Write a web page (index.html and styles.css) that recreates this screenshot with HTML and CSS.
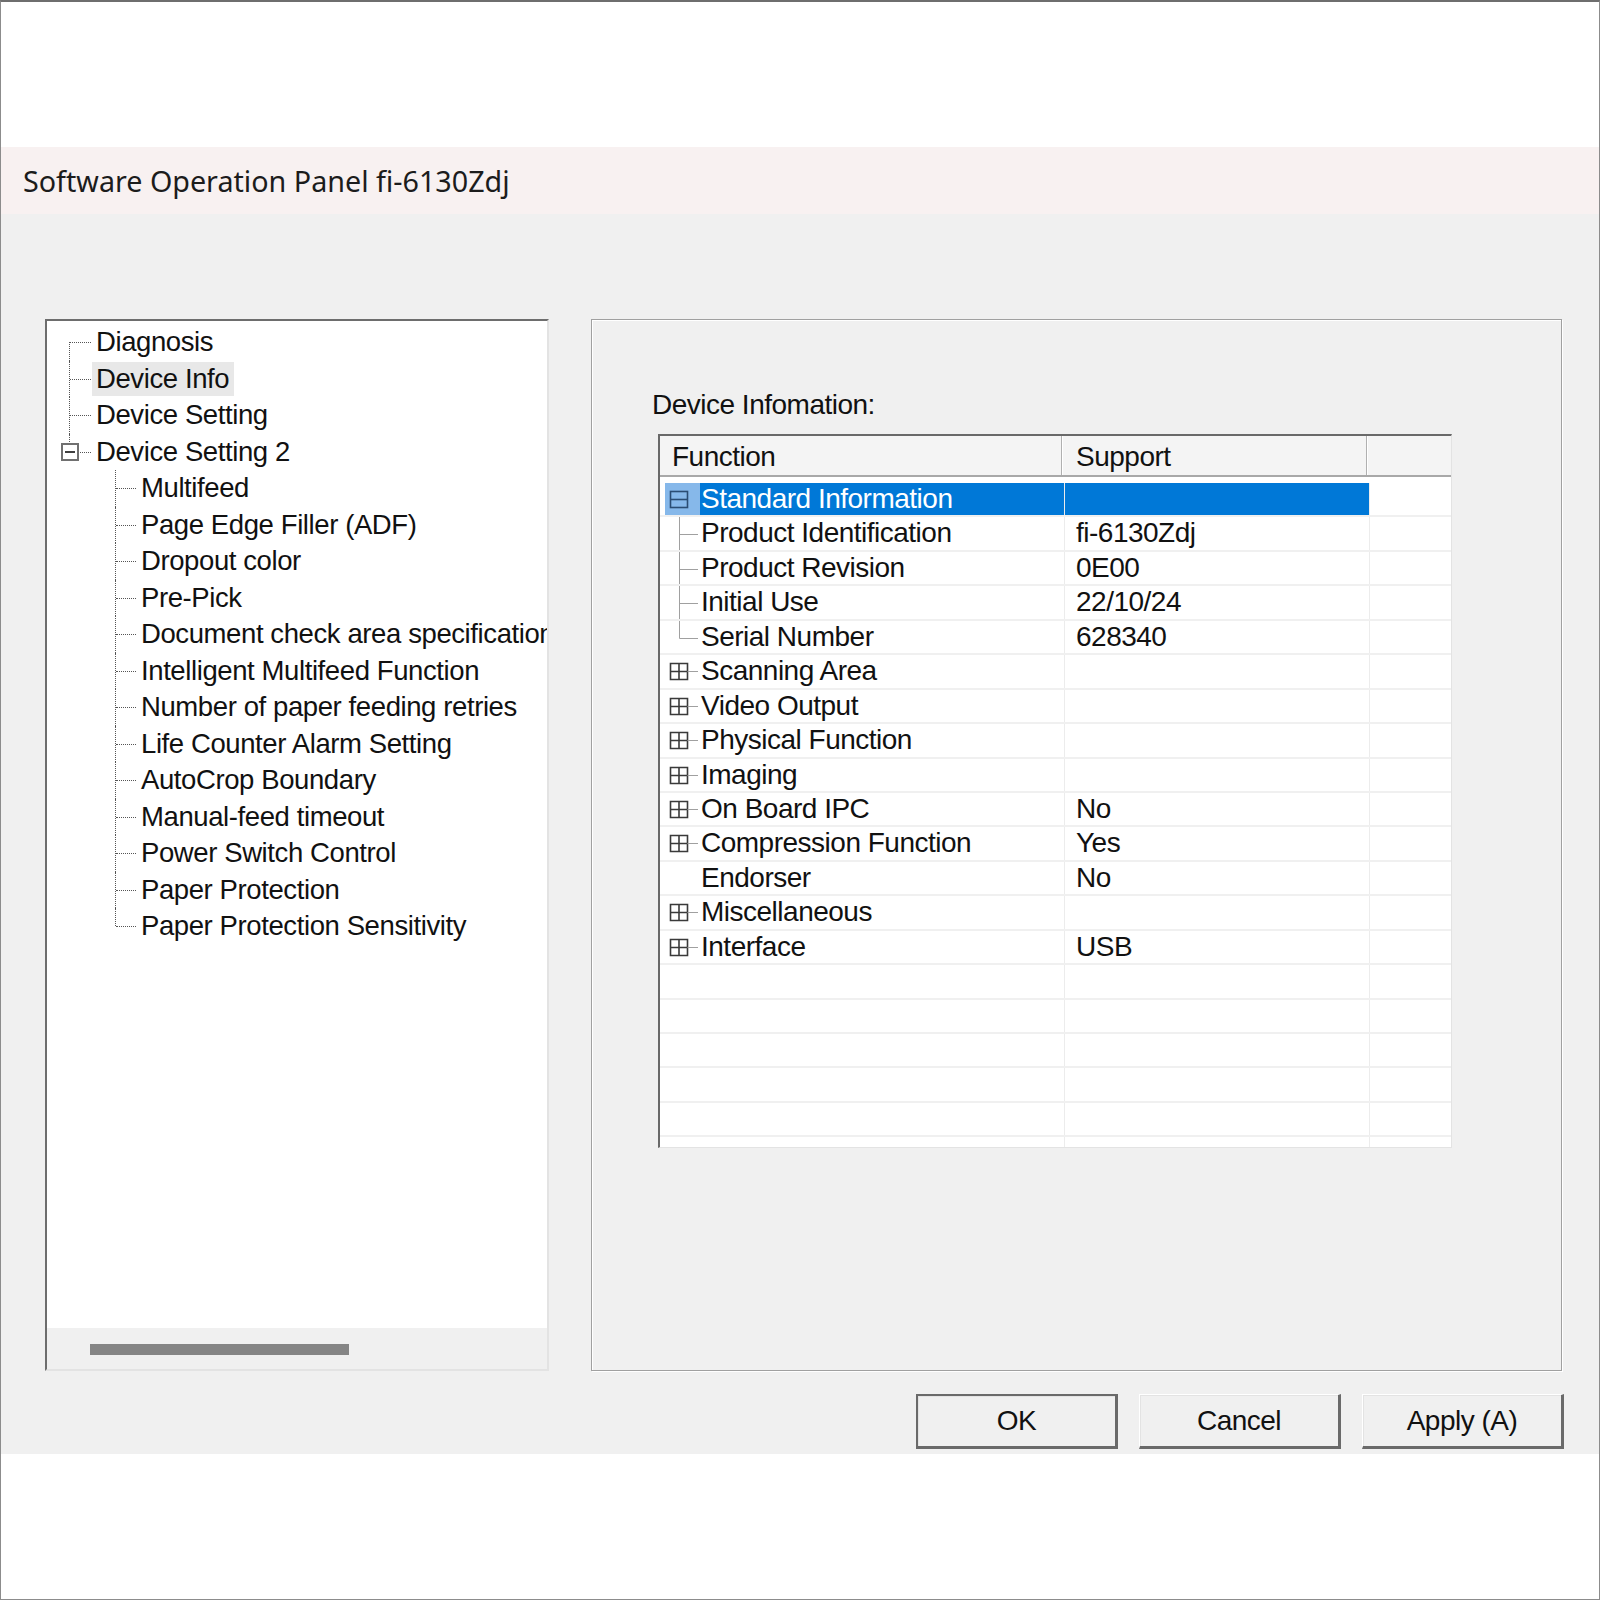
FILE: index.html
```html
<!DOCTYPE html>
<html lang="en">

<head>
    <meta charset="UTF-8">
    <meta name="viewport" content="width=device-width, initial-scale=1.0">
    <title>Software Operation Panel fi-6130Zdj</title>
    <link rel="stylesheet" href="styles.css">
</head>

<body>
    <div class="screen">
        <div class="dialog">
            <div class="titlebar">Software Operation Panel fi-6130Zdj</div>

            <div class="dialog-body">
                <div class="panels">
                    <!-- left: settings tree -->
                    <div class="tree">
                        <ul class="tree-list">
                            <li class="node l1 first"><span class="branch"></span><span class="label">Diagnosis</span></li>
                            <li class="node l1"><span class="branch"></span><span class="label selected">Device Info</span></li>
                            <li class="node l1"><span class="branch"></span><span class="label">Device Setting</span></li>
                            <li class="node l1 last"><span class="branch"><span class="toggle"></span></span><span class="label">Device Setting 2</span></li>
                            <li class="node l2"><span class="branch"></span><span class="label">Multifeed</span></li>
                            <li class="node l2"><span class="branch"></span><span class="label">Page Edge Filler (ADF)</span></li>
                            <li class="node l2"><span class="branch"></span><span class="label">Dropout color</span></li>
                            <li class="node l2"><span class="branch"></span><span class="label">Pre-Pick</span></li>
                            <li class="node l2"><span class="branch"></span><span class="label">Document check area specification</span></li>
                            <li class="node l2"><span class="branch"></span><span class="label">Intelligent Multifeed Function</span></li>
                            <li class="node l2"><span class="branch"></span><span class="label">Number of paper feeding retries</span></li>
                            <li class="node l2"><span class="branch"></span><span class="label">Life Counter Alarm Setting</span></li>
                            <li class="node l2"><span class="branch"></span><span class="label">AutoCrop Boundary</span></li>
                            <li class="node l2"><span class="branch"></span><span class="label">Manual-feed timeout</span></li>
                            <li class="node l2"><span class="branch"></span><span class="label">Power Switch Control</span></li>
                            <li class="node l2"><span class="branch"></span><span class="label">Paper Protection</span></li>
                            <li class="node l2 last"><span class="branch"></span><span class="label">Paper Protection Sensitivity</span></li>
                        </ul>
                        <div class="hscroll"><div class="thumb"></div></div>
                    </div>

                    <!-- right: device information -->
                    <div class="group">
                        <div class="group-label">Device Infomation:</div>
                        <div class="list">
                            <div class="list-head">
                                <div class="hcol c1">Function</div>
                                <div class="hcol c2">Support</div>
                                <div class="hcol c3"></div>
                            </div>
                            <div class="list-body">
                                <div class="row selected">
                                    <div class="cell c1">
                                        <span class="tw"><svg width="35" height="34" viewBox="0 0 35 34"><rect x="5.5" y="8.5" width="17" height="16" fill="none" stroke="#2b4d74" stroke-width="1.6"/><path d="M5.5 16.5H22.5" stroke="#2b4d74" stroke-width="1.6"/></svg></span>
                                        <span class="txt">Standard Information</span>
                                    </div>
                                    <div class="cell c2"></div>
                                    <div class="cell c3"></div>
                                </div>
                                <div class="row">
                                    <div class="cell c1">
                                        <span class="tw"><svg width="35" height="35" viewBox="0 0 35 35"><path d="M14.5 0V35M14.5 17.5H33" stroke="#a0a0a0" fill="none"/></svg></span>
                                        <span class="txt">Product Identification</span>
                                    </div>
                                    <div class="cell c2">fi-6130Zdj</div>
                                    <div class="cell c3"></div>
                                </div>
                                <div class="row">
                                    <div class="cell c1">
                                        <span class="tw"><svg width="35" height="35" viewBox="0 0 35 35"><path d="M14.5 0V35M14.5 17.5H33" stroke="#a0a0a0" fill="none"/></svg></span>
                                        <span class="txt">Product Revision</span>
                                    </div>
                                    <div class="cell c2">0E00</div>
                                    <div class="cell c3"></div>
                                </div>
                                <div class="row">
                                    <div class="cell c1">
                                        <span class="tw"><svg width="35" height="35" viewBox="0 0 35 35"><path d="M14.5 0V35M14.5 17.5H33" stroke="#a0a0a0" fill="none"/></svg></span>
                                        <span class="txt">Initial Use</span>
                                    </div>
                                    <div class="cell c2">22/10/24</div>
                                    <div class="cell c3"></div>
                                </div>
                                <div class="row">
                                    <div class="cell c1">
                                        <span class="tw"><svg width="35" height="35" viewBox="0 0 35 35"><path d="M14.5 0V17.5H33" stroke="#a0a0a0" fill="none"/></svg></span>
                                        <span class="txt">Serial Number</span>
                                    </div>
                                    <div class="cell c2">628340</div>
                                    <div class="cell c3"></div>
                                </div>
                                <div class="row">
                                    <div class="cell c1">
                                        <span class="tw"><svg width="35" height="34" viewBox="0 0 35 34"><path d="M5.5 8.5H22.5V24.5H5.5ZM14 8.5V24.5M5.5 16.5H22.5" stroke="#3a3a3a" stroke-width="1.6" fill="none"/><path d="M22.5 16.5H33" stroke="#a0a0a0"/></svg></span>
                                        <span class="txt">Scanning Area</span>
                                    </div>
                                    <div class="cell c2"></div>
                                    <div class="cell c3"></div>
                                </div>
                                <div class="row">
                                    <div class="cell c1">
                                        <span class="tw"><svg width="35" height="34" viewBox="0 0 35 34"><path d="M5.5 8.5H22.5V24.5H5.5ZM14 8.5V24.5M5.5 16.5H22.5" stroke="#3a3a3a" stroke-width="1.6" fill="none"/><path d="M22.5 16.5H33" stroke="#a0a0a0"/></svg></span>
                                        <span class="txt">Video Output</span>
                                    </div>
                                    <div class="cell c2"></div>
                                    <div class="cell c3"></div>
                                </div>
                                <div class="row">
                                    <div class="cell c1">
                                        <span class="tw"><svg width="35" height="34" viewBox="0 0 35 34"><path d="M5.5 8.5H22.5V24.5H5.5ZM14 8.5V24.5M5.5 16.5H22.5" stroke="#3a3a3a" stroke-width="1.6" fill="none"/><path d="M22.5 16.5H33" stroke="#a0a0a0"/></svg></span>
                                        <span class="txt">Physical Function</span>
                                    </div>
                                    <div class="cell c2"></div>
                                    <div class="cell c3"></div>
                                </div>
                                <div class="row">
                                    <div class="cell c1">
                                        <span class="tw"><svg width="35" height="34" viewBox="0 0 35 34"><path d="M5.5 8.5H22.5V24.5H5.5ZM14 8.5V24.5M5.5 16.5H22.5" stroke="#3a3a3a" stroke-width="1.6" fill="none"/><path d="M22.5 16.5H33" stroke="#a0a0a0"/></svg></span>
                                        <span class="txt">Imaging</span>
                                    </div>
                                    <div class="cell c2"></div>
                                    <div class="cell c3"></div>
                                </div>
                                <div class="row">
                                    <div class="cell c1">
                                        <span class="tw"><svg width="35" height="34" viewBox="0 0 35 34"><path d="M5.5 8.5H22.5V24.5H5.5ZM14 8.5V24.5M5.5 16.5H22.5" stroke="#3a3a3a" stroke-width="1.6" fill="none"/><path d="M22.5 16.5H33" stroke="#a0a0a0"/></svg></span>
                                        <span class="txt">On Board IPC</span>
                                    </div>
                                    <div class="cell c2">No</div>
                                    <div class="cell c3"></div>
                                </div>
                                <div class="row">
                                    <div class="cell c1">
                                        <span class="tw"><svg width="35" height="34" viewBox="0 0 35 34"><path d="M5.5 8.5H22.5V24.5H5.5ZM14 8.5V24.5M5.5 16.5H22.5" stroke="#3a3a3a" stroke-width="1.6" fill="none"/><path d="M22.5 16.5H33" stroke="#a0a0a0"/></svg></span>
                                        <span class="txt">Compression Function</span>
                                    </div>
                                    <div class="cell c2">Yes</div>
                                    <div class="cell c3"></div>
                                </div>
                                <div class="row">
                                    <div class="cell c1">
                                        <span class="tw"></span>
                                        <span class="txt">Endorser</span>
                                    </div>
                                    <div class="cell c2">No</div>
                                    <div class="cell c3"></div>
                                </div>
                                <div class="row">
                                    <div class="cell c1">
                                        <span class="tw"><svg width="35" height="34" viewBox="0 0 35 34"><path d="M5.5 8.5H22.5V24.5H5.5ZM14 8.5V24.5M5.5 16.5H22.5" stroke="#3a3a3a" stroke-width="1.6" fill="none"/><path d="M22.5 16.5H33" stroke="#a0a0a0"/></svg></span>
                                        <span class="txt">Miscellaneous</span>
                                    </div>
                                    <div class="cell c2"></div>
                                    <div class="cell c3"></div>
                                </div>
                                <div class="row">
                                    <div class="cell c1">
                                        <span class="tw"><svg width="35" height="34" viewBox="0 0 35 34"><path d="M5.5 8.5H22.5V24.5H5.5ZM14 8.5V24.5M5.5 16.5H22.5" stroke="#3a3a3a" stroke-width="1.6" fill="none"/><path d="M22.5 16.5H33" stroke="#a0a0a0"/></svg></span>
                                        <span class="txt">Interface</span>
                                    </div>
                                    <div class="cell c2">USB</div>
                                    <div class="cell c3"></div>
                                </div>
                                <div class="row"><div class="cell c1"></div><div class="cell c2"></div><div class="cell c3"></div></div>
                                <div class="row"><div class="cell c1"></div><div class="cell c2"></div><div class="cell c3"></div></div>
                                <div class="row"><div class="cell c1"></div><div class="cell c2"></div><div class="cell c3"></div></div>
                                <div class="row"><div class="cell c1"></div><div class="cell c2"></div><div class="cell c3"></div></div>
                                <div class="row"><div class="cell c1"></div><div class="cell c2"></div><div class="cell c3"></div></div>
                                <div class="row"><div class="cell c1"></div><div class="cell c2"></div><div class="cell c3"></div></div>
                            </div>
                        </div>
                    </div>
                </div>

                <div class="buttons">
                    <button class="btn default">OK</button>
                    <button class="btn">Cancel</button>
                    <button class="btn">Apply (A)</button>
                </div>
            </div>
        </div>
    </div>
</body>

</html>
```

FILE: styles.css
```css
body {
    margin: 0;
    background-color: #fff;
    font-family: 'Liberation Sans', Arial, sans-serif;
    color: #111;
}

.screen {
    width: 1600px;
    height: 1600px;
    box-sizing: border-box;
    border: 1px solid #8c8c8c;
    border-top: 2px solid #6e6e6e;
    padding-top: 145px;
}

.dialog {
    height: 1307px;
    background-color: #f0f0f0;
    display: flex;
    flex-direction: column;
}

.titlebar {
    height: 67px;
    display: flex;
    align-items: center;
    padding-left: 22px;
    background-color: #f8f1f1;
    font-family: 'Noto Sans', 'Liberation Sans', sans-serif;
    font-size: 28.7px;
    color: #1c1c1c;
}

.dialog-body {
    padding: 105px 35px 0 44px;
}

.panels {
    display: flex;
    gap: 42px;
    height: 1052px;
}

/* tree view */
.tree {
    width: 504px;
    box-sizing: border-box;
    border-top: 2px solid #6d6d6d;
    border-left: 2px solid #6d6d6d;
    border-right: 2px solid #e3e3e3;
    border-bottom: 2px solid #e3e3e3;
    background-color: #fff;
    display: flex;
    flex-direction: column;
    overflow: hidden;
}

.tree-list {
    flex: 1;
    list-style: none;
    margin: 0;
    padding: 3px 0 0 0;
    font-size: 27.5px;
    letter-spacing: -0.4px;
}

.node {
    display: flex;
    height: 36.5px;
    align-items: center;
    white-space: nowrap;
}

.branch {
    position: relative;
    align-self: stretch;
    flex: none;
}

.l1 .branch { width: 45px; --x: 22px; }
.l2 .branch { width: 90px; --x: 68px; }

.branch::before {
    content: '';
    position: absolute;
    left: var(--x);
    top: 0;
    bottom: 0;
    border-left: 1px dotted #555;
}

.branch::after {
    content: '';
    position: absolute;
    left: calc(var(--x) + 1px);
    right: 1px;
    top: 50%;
    border-top: 1px dotted #555;
}

.first .branch::before { top: 50%; }
.last .branch::before { bottom: 50%; }

.toggle {
    position: absolute;
    z-index: 1;
    left: 14px;
    top: calc(50% - 9px);
    width: 18px;
    height: 18px;
    box-sizing: border-box;
    border: 2px solid #707070;
    background-color: #fff;
}

.toggle::after {
    content: '';
    position: absolute;
    left: 2px;
    right: 2px;
    top: 6px;
    border-top: 2px solid #404040;
}

.label {
    height: 34px;
    line-height: 34px;
    padding: 0 5px 0 4px;
}

.label.selected {
    background-color: #e8e8e8;
}

.hscroll {
    height: 41px;
    background-color: #f0f0f0;
    padding: 16px 0 0 43px;
    box-sizing: border-box;
}

.thumb {
    width: 259px;
    height: 11px;
    background-color: #858585;
}

/* right group */
.group {
    width: 971px;
    box-sizing: border-box;
    border: 1px solid #a0a0a0;
    box-shadow: inset 1px 1px 0 #fff, 1px 1px 0 #fff;
    padding: 69px 0 0 60px;
}

.group-label {
    font-size: 28px;
    line-height: 32px;
    letter-spacing: -0.5px;
}

.list {
    margin: 13px 0 0 6px;
    width: 794px;
    height: 714px;
    box-sizing: border-box;
    border-top: 2px solid #696969;
    border-left: 2px solid #696969;
    border-right: 1px solid #e3e3e3;
    border-bottom: 1px solid #e3e3e3;
    background-color: #fff;
    overflow: hidden;
    font-size: 28px;
    letter-spacing: -0.5px;
}

.list-head {
    display: flex;
    height: 41px;
    box-sizing: border-box;
    background-color: #f4f4f4;
    border-bottom: 2px solid #a8a8a8;
}

.hcol {
    box-sizing: border-box;
    line-height: 41px;
    border-right: 1px solid #b0b0b0;
    box-shadow: 1px 0 0 #fff;
}

.hcol.c1 { width: 402px; padding-left: 12px; }
.hcol.c2 { width: 305px; padding-left: 14px; }
.hcol.c3 { flex: 1; border-right: none; box-shadow: none; }

.list-body {
    padding-top: 6px;
}

.row {
    display: flex;
    height: 34.45px;
    box-sizing: border-box;
    border-bottom: 2px solid #f0f0f0;
}

.cell {
    box-sizing: border-box;
    white-space: nowrap;
    line-height: 32px;
    border-right: 1px solid #ececec;
}

.cell.c1 {
    width: 405px;
    display: flex;
    padding-left: 5px;
}

.cell.c2 { width: 305px; padding-left: 11px; }
.cell.c3 { flex: 1; border-right: none; }

.tw {
    width: 35px;
    flex: none;
    overflow: hidden;
}

.tw svg { display: block; }

.txt {
    flex: 1;
    padding-left: 1px;
}

.row.selected .tw { background-color: #86b8ea; }
.row.selected .txt,
.row.selected .c2 {
    background-color: #0078d7;
    color: #fff;
}

/* buttons */
.buttons {
    display: flex;
    justify-content: flex-end;
    gap: 21px;
    margin-top: 23px;
}

.btn {
    width: 202px;
    height: 55px;
    box-sizing: border-box;
    background-color: #f0f0f0;
    border: 1px solid;
    border-color: #fff #6a6a6a #6a6a6a #fff;
    border-width: 1px 3px 3px 1px;
    box-shadow: inset 1px 1px 0 #e3e3e3;
    font-family: 'Liberation Sans', Arial, sans-serif;
    font-size: 28px;
    letter-spacing: -0.5px;
    color: #111;
    padding: 0;
}

.btn.default {
    border: 2px solid #6a6a6a;
    border-width: 2px 3px 3px 2px;
}
```
